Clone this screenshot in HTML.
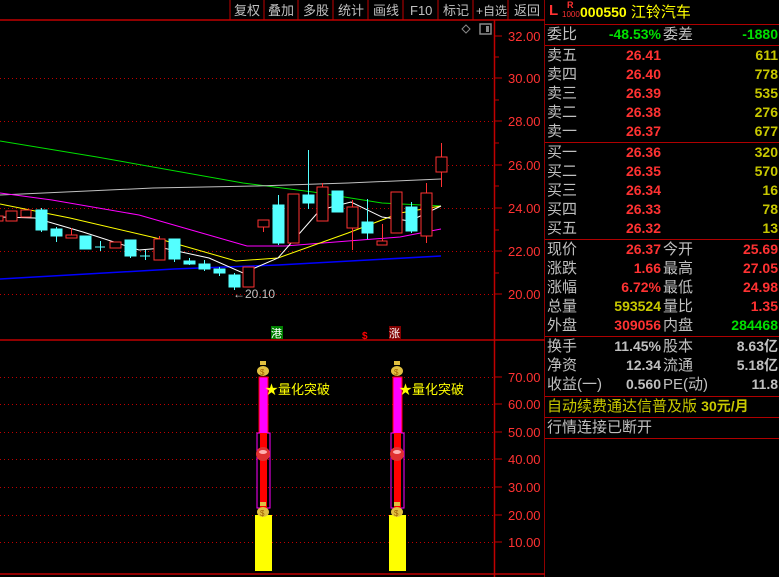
<!DOCTYPE html>
<html><head><meta charset="utf-8"><style>
html,body{margin:0;padding:0;background:#000;width:779px;height:577px;overflow:hidden;font-family:"Liberation Sans","Noto Sans CJK SC",sans-serif;}
.p{position:absolute;}
.rp{position:absolute;left:545px;top:0;width:234px;height:577px;}
.row{position:absolute;left:0;width:234px;height:19px;font-size:15px;line-height:19px;}
.row .l{position:absolute;left:2px;color:#c0c0c0;}
.row .m{position:absolute;right:118px;font-weight:bold;font-size:14px;}
.row .l2{position:absolute;left:118px;color:#c0c0c0;}
.row .r{position:absolute;right:1px;font-weight:bold;font-size:14px;}
.hl{position:absolute;left:0;width:234px;height:1px;background:#b00000;}
.red{color:#ff3232}.yel{color:#c8c800}.grn{color:#00e000}.gry{color:#c0c0c0}
</style></head><body>
<svg class="p" style="left:0;top:0" width="545" height="577" xmlns="http://www.w3.org/2000/svg" font-family="Liberation Sans,Noto Sans CJK SC,sans-serif">
<!-- toolbar -->
<line x1="0" y1="20" x2="545" y2="20" stroke="#c00000" stroke-width="1.5"/>
<g stroke="#c00000"><line x1="230" y1="0" x2="230" y2="20"/><line x1="264" y1="0" x2="264" y2="20"/><line x1="298" y1="0" x2="298" y2="20"/><line x1="333" y1="0" x2="333" y2="20"/><line x1="368" y1="0" x2="368" y2="20"/><line x1="403" y1="0" x2="403" y2="20"/><line x1="438" y1="0" x2="438" y2="20"/><line x1="473" y1="0" x2="473" y2="20"/><line x1="508" y1="0" x2="508" y2="20"/></g>
<g fill="#c0c0c0" font-size="13"><text x="234" y="15">复权</text><text x="268" y="15">叠加</text><text x="303" y="15">多股</text><text x="338" y="15">统计</text><text x="373" y="15">画线</text><text x="410" y="15">F10</text><text x="443" y="15">标记</text><text x="476" y="15" font-size="12">+自选</text><text x="514" y="15">返回</text></g>
<!-- axis -->
<line x1="494.5" y1="20" x2="494.5" y2="577" stroke="#c00000" stroke-width="1.5"/>
<line x1="0" y1="340" x2="545" y2="340" stroke="#c00000" stroke-width="1.5"/>
<line x1="0" y1="574" x2="545" y2="574" stroke="#c00000" stroke-width="1.5"/>
<line x1="545" y1="0" x2="545" y2="577" stroke="#c00000" stroke-width="1.5"/>
<g stroke="#c00000" stroke-dasharray="1,3">
<line x1="0" y1="78.5" x2="494" y2="78.5"/><line x1="0" y1="121.5" x2="494" y2="121.5"/><line x1="0" y1="165.5" x2="494" y2="165.5"/><line x1="0" y1="208.5" x2="494" y2="208.5"/><line x1="0" y1="251.5" x2="494" y2="251.5"/><line x1="0" y1="294.5" x2="494" y2="294.5"/>
<line x1="0" y1="377.5" x2="494" y2="377.5"/><line x1="0" y1="404.5" x2="494" y2="404.5"/><line x1="0" y1="432.5" x2="494" y2="432.5"/><line x1="0" y1="459.5" x2="494" y2="459.5"/><line x1="0" y1="487.5" x2="494" y2="487.5"/><line x1="0" y1="515.5" x2="494" y2="515.5"/><line x1="0" y1="542.5" x2="494" y2="542.5"/>
</g>
<g stroke="#c00000"><line x1="495" y1="36" x2="502" y2="36"/><line x1="495" y1="57" x2="499" y2="57"/><line x1="495" y1="78" x2="502" y2="78"/><line x1="495" y1="100" x2="499" y2="100"/><line x1="495" y1="121" x2="502" y2="121"/><line x1="495" y1="143" x2="499" y2="143"/><line x1="495" y1="165" x2="502" y2="165"/><line x1="495" y1="186" x2="499" y2="186"/><line x1="495" y1="208" x2="502" y2="208"/><line x1="495" y1="230" x2="499" y2="230"/><line x1="495" y1="251" x2="502" y2="251"/><line x1="495" y1="273" x2="499" y2="273"/><line x1="495" y1="294" x2="502" y2="294"/>
<line x1="495" y1="377" x2="502" y2="377"/><line x1="495" y1="404" x2="502" y2="404"/><line x1="495" y1="432" x2="502" y2="432"/><line x1="495" y1="459" x2="502" y2="459"/><line x1="495" y1="487" x2="502" y2="487"/><line x1="495" y1="515" x2="502" y2="515"/><line x1="495" y1="542" x2="502" y2="542"/></g>
<g fill="#ff3232" font-size="13"><text x="508" y="41">32.00</text><text x="508" y="83">30.00</text><text x="508" y="126">28.00</text><text x="508" y="170">26.00</text><text x="508" y="213">24.00</text><text x="508" y="256">22.00</text><text x="508" y="299">20.00</text>
<text x="508" y="382">70.00</text><text x="508" y="409">60.00</text><text x="508" y="437">50.00</text><text x="508" y="464">40.00</text><text x="508" y="492">30.00</text><text x="508" y="520">20.00</text><text x="508" y="547">10.00</text></g>
<!-- icons -->
<path d="M466 25 L470 29 L466 33 L462 29 Z" fill="none" stroke="#888"/>
<rect x="480" y="24" width="11" height="10" fill="none" stroke="#888" stroke-width="1.5"/><rect x="486" y="26" width="3" height="6" fill="#888"/>
<!-- MA lines -->
<polyline fill="none" stroke="#00e000" points="0,141 97,157 243,183 313,192 382,203 441,206"/>
<polyline fill="none" stroke="#c0c0c0" points="0,195 153,188 257,186 348,183 441,179"/>
<polyline fill="none" stroke="#ff00ff" points="0,193 52,200 139,215 247,246 285,246 348,241 400,237 441,229"/>
<polyline fill="none" stroke="#ffff00" points="0,204 70,218 156,238 236,261 278,258 348,233 400,213 441,206"/>
<polyline fill="none" stroke="#0000ff" stroke-width="1.5" points="0,279 174,269 278,265 441,256"/>
<polyline fill="none" stroke="#fff" points="0,217 35,218 83,232 139,250 163,248 209,258 243,273 278,258 320,210 351,202 382,217 410,221 441,206"/>
<!-- candles -->
<g stroke="#ff3232" fill="#000">
<rect x="-2" y="216" width="5" height="5"/><rect x="6" y="211" width="11" height="10"/><rect x="21" y="210" width="10" height="7"/>
<line x1="71.5" y1="228" x2="71.5" y2="235"/><rect x="66" y="235" width="11" height="3"/>
<rect x="110" y="242" width="11" height="6"/>
<line x1="159.5" y1="236" x2="159.5" y2="239"/><rect x="154" y="239" width="11" height="21"/>
<rect x="243" y="267" width="11" height="20"/><line x1="263.5" y1="227" x2="263.5" y2="232"/><rect x="258" y="220" width="11" height="7"/>
<rect x="288" y="194" width="11" height="49"/><line x1="322.5" y1="183" x2="322.5" y2="187"/><rect x="317" y="187" width="11" height="34"/>
<line x1="352.5" y1="200" x2="352.5" y2="250"/><rect x="347" y="207" width="11" height="21"/>
<line x1="382.5" y1="224" x2="382.5" y2="241"/><rect x="377" y="241" width="10" height="4"/>
<rect x="391" y="192" width="11" height="41"/>
<line x1="426.5" y1="183" x2="426.5" y2="243"/><rect x="421" y="193" width="11" height="43"/>
<line x1="441.5" y1="143" x2="441.5" y2="187"/><rect x="436" y="157" width="11" height="15"/>
</g>
<g fill="#54ffff" stroke="#54ffff">
<line x1="41.5" y1="208" x2="41.5" y2="232"/><rect x="36" y="210" width="11" height="20"/>
<line x1="56.5" y1="227" x2="56.5" y2="242"/><rect x="51" y="229" width="11" height="7"/>
<rect x="80" y="236" width="11" height="13"/>
<line x1="100.5" y1="241" x2="100.5" y2="251"/><line x1="95" y1="247" x2="105" y2="247"/>
<line x1="130.5" y1="240" x2="130.5" y2="258"/><rect x="125" y="240" width="11" height="16"/>
<line x1="145.5" y1="250" x2="145.5" y2="260"/><line x1="140" y1="256" x2="150" y2="256"/>
<line x1="174.5" y1="239" x2="174.5" y2="262"/><rect x="169" y="239" width="11" height="20"/>
<line x1="189.5" y1="258" x2="189.5" y2="265"/><rect x="184" y="261" width="11" height="3"/>
<line x1="204.5" y1="260" x2="204.5" y2="271"/><rect x="199" y="264" width="11" height="5"/>
<line x1="219.5" y1="267" x2="219.5" y2="276"/><rect x="214" y="269" width="11" height="4"/>
<line x1="234.5" y1="273" x2="234.5" y2="290"/><rect x="229" y="275" width="11" height="12"/>
<line x1="278.5" y1="195" x2="278.5" y2="245"/><rect x="273" y="205" width="11" height="38"/>
<line x1="308.5" y1="150" x2="308.5" y2="209"/><rect x="303" y="195" width="11" height="8"/>
<rect x="332" y="191" width="11" height="21"/>
<line x1="367.5" y1="199" x2="367.5" y2="239"/><rect x="362" y="222" width="11" height="11"/>
<line x1="411.5" y1="202" x2="411.5" y2="233"/><rect x="406" y="207" width="11" height="24"/>
</g>
<text x="233" y="298" fill="#c0c0c0" font-size="12">←20.10</text>
<!-- markers -->
<rect x="271" y="326" width="12" height="13" fill="#008000"/><text x="271" y="337" fill="#fff" font-size="11">港</text>
<text x="362" y="339" fill="#ff0000" font-size="10" font-weight="bold">$</text>
<rect x="389" y="326" width="12" height="13" fill="#800000"/><text x="389" y="337" fill="#fff" font-size="11">涨</text>
<!-- lower bars -->
<g id="b1">
<rect x="255" y="515" width="17" height="56" fill="#ffff00"/>
<rect x="259" y="377" width="9" height="56" fill="#ff00ff" stroke="#ff0000"/>
<rect x="257" y="433" width="13" height="75" fill="none" stroke="#ff00ff"/>
<rect x="260" y="433" width="7" height="75" fill="#ff0000"/>
<circle cx="263" cy="454" r="7" fill="#e03030"/><ellipse cx="263" cy="452" rx="4" ry="2" fill="#ffb0b0"/>
<ellipse cx="263" cy="371" rx="6" ry="5" fill="#e0c040"/><rect x="260" y="361" width="6" height="4" fill="#e0c040"/><text x="260" y="375" font-size="8" fill="#a06000">$</text>
<ellipse cx="263" cy="512" rx="6" ry="5" fill="#e0c040"/><rect x="260" y="502" width="6" height="4" fill="#e0c040"/><text x="260" y="516" font-size="8" fill="#a06000">$</text>
<text x="265" y="394" font-size="13" fill="#ffff00">★量化突破</text>
</g>
<use href="#b1" x="134"/>
</svg>
<div class="rp">
<div class="p" style="left:4px;top:2px;color:#ff3232;font-weight:bold;font-size:15px">L</div>
<div class="p" style="left:22px;top:0px;color:#ff3232;font-size:9px;font-weight:bold">R</div>
<div class="p" style="left:17px;top:10px;color:#ff3232;font-size:8px">1000</div>
<div class="p" style="left:35px;top:2px;color:#ffff00;font-size:15px;line-height:20px"><b style="font-size:14px">000550</b> 江铃汽车</div>
<div class="hl" style="top:24px"></div>
<div class="row" style="top:25px"><span class="l">委比</span><span class="m grn">-48.53%</span><span class="l2">委差</span><span class="r grn">-1880</span></div>
<div class="hl" style="top:45px"></div>
<div class="row" style="top:46px"><span class="l">卖五</span><span class="m red">26.41</span><span class="r yel">611</span></div>
<div class="row" style="top:65px"><span class="l">卖四</span><span class="m red">26.40</span><span class="r yel">778</span></div>
<div class="row" style="top:84px"><span class="l">卖三</span><span class="m red">26.39</span><span class="r yel">535</span></div>
<div class="row" style="top:103px"><span class="l">卖二</span><span class="m red">26.38</span><span class="r yel">276</span></div>
<div class="row" style="top:122px"><span class="l">卖一</span><span class="m red">26.37</span><span class="r yel">677</span></div>
<div class="hl" style="top:142px"></div>
<div class="row" style="top:143px"><span class="l">买一</span><span class="m red">26.36</span><span class="r yel">320</span></div>
<div class="row" style="top:162px"><span class="l">买二</span><span class="m red">26.35</span><span class="r yel">570</span></div>
<div class="row" style="top:181px"><span class="l">买三</span><span class="m red">26.34</span><span class="r yel">16</span></div>
<div class="row" style="top:200px"><span class="l">买四</span><span class="m red">26.33</span><span class="r yel">78</span></div>
<div class="row" style="top:219px"><span class="l">买五</span><span class="m red">26.32</span><span class="r yel">13</span></div>
<div class="hl" style="top:239px"></div>
<div class="row" style="top:240px"><span class="l">现价</span><span class="m red">26.37</span><span class="l2">今开</span><span class="r red">25.69</span></div>
<div class="row" style="top:259px"><span class="l">涨跌</span><span class="m red">1.66</span><span class="l2">最高</span><span class="r red">27.05</span></div>
<div class="row" style="top:278px"><span class="l">涨幅</span><span class="m red">6.72%</span><span class="l2">最低</span><span class="r red">24.98</span></div>
<div class="row" style="top:297px"><span class="l">总量</span><span class="m yel">593524</span><span class="l2">量比</span><span class="r red">1.35</span></div>
<div class="row" style="top:316px"><span class="l">外盘</span><span class="m red">309056</span><span class="l2">内盘</span><span class="r grn">284468</span></div>
<div class="hl" style="top:336px"></div>
<div class="row" style="top:337px"><span class="l">换手</span><span class="m gry">11.45%</span><span class="l2">股本</span><span class="r gry">8.63亿</span></div>
<div class="row" style="top:356px"><span class="l">净资</span><span class="m gry">12.34</span><span class="l2">流通</span><span class="r gry">5.18亿</span></div>
<div class="row" style="top:375px"><span class="l">收益(一)</span><span class="m gry">0.560</span><span class="l2">PE(动)</span><span class="r gry">11.8</span></div>
<div class="hl" style="top:396px"></div>
<div class="row" style="top:397px;color:#c8c800"><span style="position:absolute;left:2px">自动续费通达信普及版 <b style="font-size:14px">30元/月</b></span></div>
<div class="hl" style="top:417px"></div>
<div class="row" style="top:418px"><span class="l">行情连接已断开</span></div>
<div class="hl" style="top:438px"></div>
</div>
</body></html>
